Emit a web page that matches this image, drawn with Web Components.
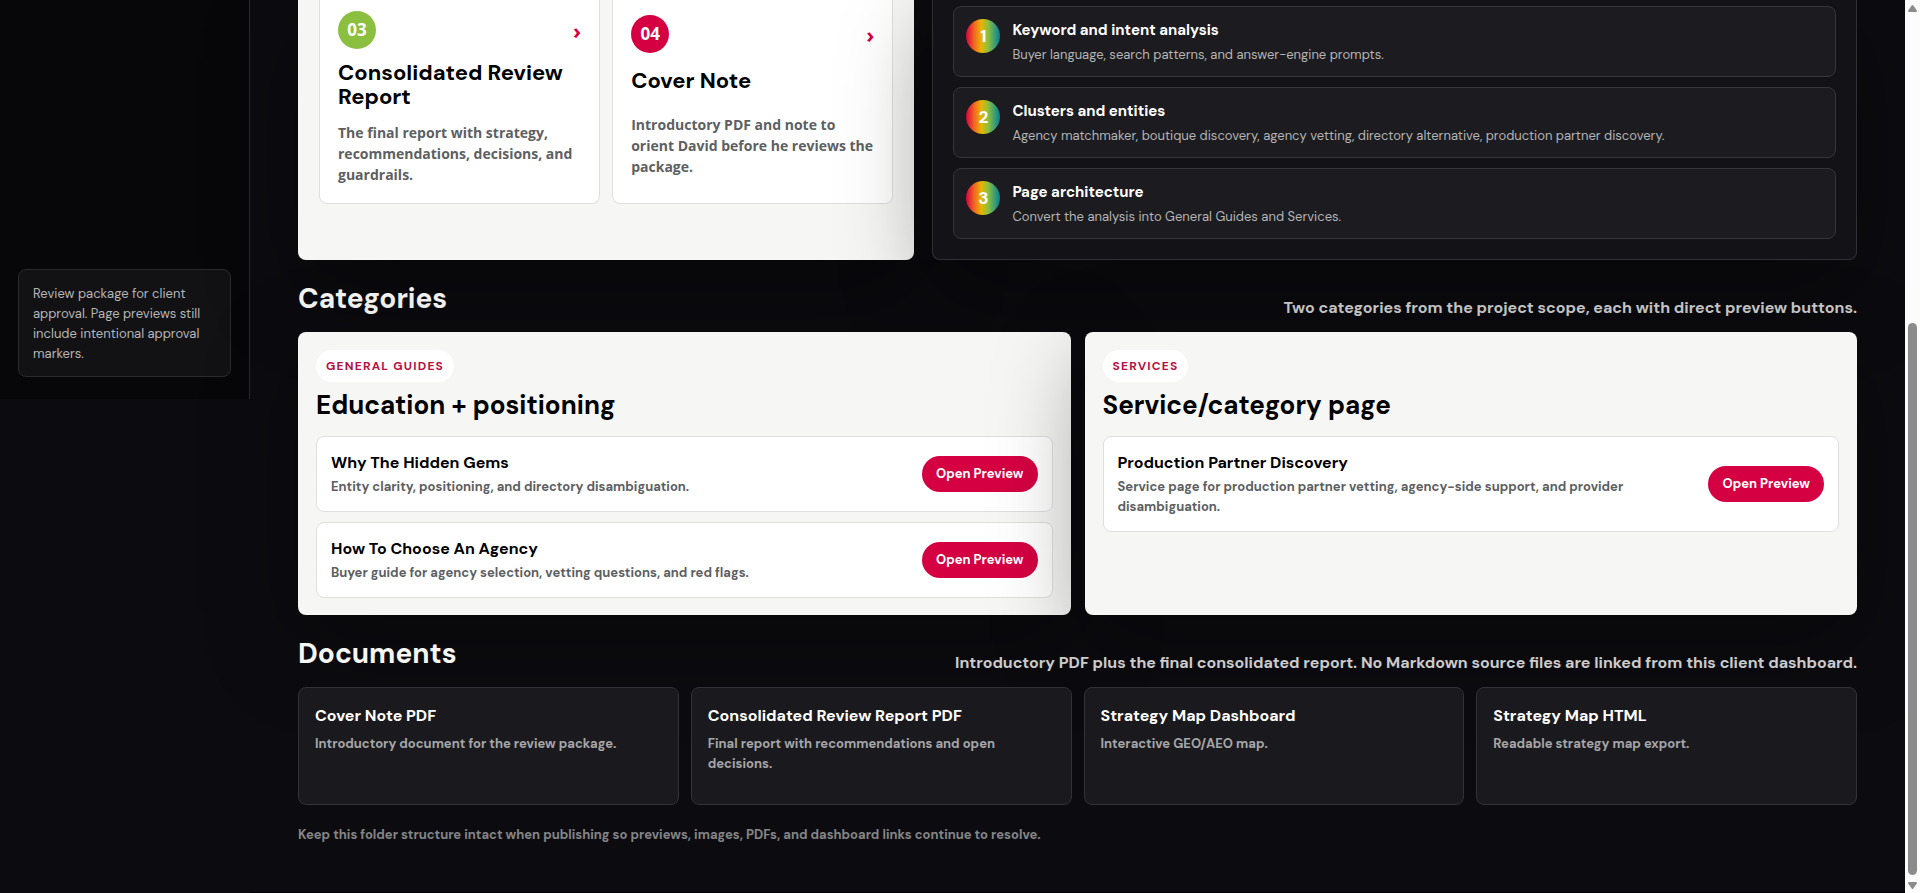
<!DOCTYPE html>
<html lang="en">
<head>
<meta charset="utf-8">
<title>Review package dashboard</title>
<style>
  body {
    margin: 0;
    background: #0c0c10;
    color: #fff;
    font: 400 16px/24px "DM Sans", Inter, "Open Sans", sans-serif;
  }
</style>
</head>
<body>
<app-shell>
  <side-note slot="side">Review package for client approval. Page previews still include intentional approval markers.</side-note>

  <panel-row>
    <review-panel>
      <review-card number="03" color="#8bbf3f" heading="Consolidated Review Report">The final report with strategy, recommendations, decisions, and guardrails.</review-card>
      <review-card number="04" color="#d50042" heading="Cover Note">Introductory PDF and note to orient David before he reviews the package.</review-card>
    </review-panel>
    <step-panel>
      <step-item number="1" heading="Keyword and intent analysis">Buyer language, search patterns, and answer-engine prompts.</step-item>
      <step-item number="2" heading="Clusters and entities">Agency matchmaker, boutique discovery, agency vetting, directory alternative, production partner discovery.</step-item>
      <step-item number="3" heading="Page architecture">Convert the analysis into General Guides and Services.</step-item>
    </step-panel>
  </panel-row>

  <section-head heading="Categories">Two categories from the project scope, each with direct preview buttons.</section-head>
  <category-grid>
    <category-panel label="General Guides" heading="Education + positioning">
      <preview-row heading="Why The Hidden Gems">Entity clarity, positioning, and directory disambiguation.</preview-row>
      <preview-row heading="How To Choose An Agency">Buyer guide for agency selection, vetting questions, and red flags.</preview-row>
    </category-panel>
    <category-panel label="Services" heading="Service/category page">
      <preview-row heading="Production Partner Discovery">Service page for production partner vetting, agency-side support, and provider disambiguation.</preview-row>
    </category-panel>
  </category-grid>

  <section-head heading="Documents">Introductory PDF plus the final consolidated report. No Markdown source files are linked from this client dashboard.</section-head>
  <doc-grid>
    <doc-card heading="Cover Note PDF">Introductory document for the review package.</doc-card>
    <doc-card heading="Consolidated Review Report PDF">Final report with recommendations and open decisions.</doc-card>
    <doc-card heading="Strategy Map Dashboard">Interactive GEO/AEO map.</doc-card>
    <doc-card heading="Strategy Map HTML">Readable strategy map export.</doc-card>
  </doc-grid>
  <page-footer>Keep this folder structure intact when publishing so previews, images, PDFs, and dashboard links continue to resolve.</page-footer>

  <scroll-rail slot="rail"></scroll-rail>
</app-shell>

<script>
  const BASE = `:host, *, ::before { box-sizing: border-box; } h2, h3, p { margin: 0; } a { color: inherit; text-decoration: none; }`;

  // Registers an element whose shadow root is built from its attributes.
  function define(name, css, html) {
    customElements.define(name, class extends HTMLElement {
      constructor() {
        super();
        this.attachShadow({ mode: 'open' });
      }
      connectedCallback() {
        const t = document.createElement('template');
        t.innerHTML = `<style>${BASE}${css}</style>` + html(this);
        this.shadowRoot.replaceChildren(t.content.cloneNode(true));
      }
    });
  }
  const at = (el, name) => el.getAttribute(name) || '';
  const slotOnly = () => '<slot></slot>';

  define('app-shell', `
    :host { display: grid; grid-template-columns: 250px minmax(0, 1fr) 15px; min-height: 100vh;
      --panel-shadow: 0 28px 90px rgba(0, 0, 0, .36); }
    aside { align-self: start; display: flex; flex-direction: column; justify-content: flex-end; min-height: 399px;
      padding: 22px 18px; background: #070709; border-right: 1px solid #29292c; }
    main { padding: 0 48px 47px; border-bottom: 1px solid #000; }
  `, () => `<aside><slot name="side"></slot></aside><main><slot></slot></main><slot name="rail"></slot>`);

  define('side-note', `
    :host { display: block; padding: 14px 14px 12px; border: 1px solid #2b2b2e; border-radius: 8px;
      background: #121214; color: #b6b6b6; font-size: 13px; line-height: 20px; }
  `, slotOnly);

  define('panel-row', `
    :host { display: grid; grid-template-columns: minmax(0, 2fr) minmax(0, 3fr); gap: 18px; }
  `, slotOnly);

  define('review-panel', `
    :host { display: grid; grid-template-columns: repeat(2, minmax(0, 1fr)); gap: 12px; align-items: start;
      padding: 0 21px; background: #f6f6f4; border-radius: 0 0 8px 8px; box-shadow: var(--panel-shadow); }
  `, slotOnly);

  define('review-card', `
    :host { display: block; font-family: "Open Sans", "Noto Sans", sans-serif; }
    a { display: grid; gap: 9px; min-height: 204px; padding: 9px 18px 13px; background: #fff; color: #000;
      border: 1px solid #dfdfdd; border-top: 0; border-radius: 0 0 8px 8px; }
    .top { display: flex; align-items: center; justify-content: space-between; }
    .badge { display: grid; place-items: center; width: 38px; height: 38px; border-radius: 50%;
      color: #fff; font-size: 17px; font-weight: 700; }
    .arrow { color: #d50042; font-size: 22px; line-height: 22px; font-weight: 700; }
    h3 { font: 700 22px/24px "DM Sans", Inter, sans-serif; }
    p { color: #5d5f63; font-size: 14px; line-height: 21px; font-weight: 700; }
  `, el => `<a href="#"><div class="top"><span class="badge" style="background:${at(el, 'color')}">${at(el, 'number')}</span><span class="arrow">›</span></div>
    <h3>${at(el, 'heading')}</h3><p><slot></slot></p></a>`);

  define('step-panel', `
    :host { display: flex; flex-direction: column; gap: 10px; padding: 6px 20px 20px; background: #121217;
      border: 1px solid #303034; border-top: 0; border-radius: 0 0 8px 8px; box-shadow: var(--panel-shadow); }
  `, slotOnly);

  define('step-item', `
    :host { display: flex; gap: 12px; padding: 12px 12px 11px; background: #1c1c20; border: 1px solid #36363a; border-radius: 8px; }
    .dot { display: grid; place-items: center; flex: none; width: 34px; height: 34px; border-radius: 50%; font-size: 17px; font-weight: 700;
      background: linear-gradient(90deg, #d50042, #f26a21 25%, #e8b500 45%, #8bbf3f 65%, #00819b); }
    h3 { font-size: 15px; line-height: 22px; font-weight: 700; }
    p { margin-top: 4px; color: #b4b4b5; font-size: 13px; line-height: 20px; }
  `, el => `<span class="dot">${at(el, 'number')}</span><div><h3>${at(el, 'heading')}</h3><p><slot></slot></p></div>`);

  define('section-head', `
    :host { display: flex; align-items: flex-end; justify-content: space-between; gap: 20px; margin: 18px 0 12px; }
    h2 { font-size: 28px; line-height: 42px; font-weight: 700; color: #f6f6f4; }
    p { color: #cbcbcb; font-weight: 700; text-align: right; }
  `, el => `<h2>${at(el, 'heading')}</h2><p><slot></slot></p>`);

  define('category-grid', `
    :host { display: grid; grid-template-columns: repeat(2, minmax(0, 1fr)); gap: 14px; }
  `, slotOnly);

  define('category-panel', `
    :host { display: block; padding: 18px 18px 17px; background: #f6f6f4; color: #000; border-radius: 8px;
      box-shadow: var(--panel-shadow); }
    .pill { display: block; width: fit-content; padding: 6px 10px; border-radius: 16px; background: #fff; color: #b80f45;
      font-size: 12px; line-height: 20px; font-weight: 700; letter-spacing: .1em; text-transform: uppercase; }
    h3 { margin: 9px 0 17px; font-size: 26px; line-height: 28px; font-weight: 700; }
    .rows { display: grid; gap: 10px; }
  `, el => `<span class="pill">${at(el, 'label')}</span><h3>${at(el, 'heading')}</h3><div class="rows"><slot></slot></div>`);

  define('preview-row', `
    :host { display: flex; align-items: center; justify-content: space-between; gap: 12px; padding: 14px;
      background: #fff; border: 1px solid #dfdfdd; border-radius: 8px; }
    h3 { font-size: 16px; line-height: 24px; font-weight: 700; }
    p { margin-top: 2px; color: #5d5f63; font-size: 13px; line-height: 20px; font-weight: 700; }
    a { flex: none; padding: 8px 14px; border-radius: 18px; background: #d50042; color: #fff;
      font-size: 13px; line-height: 20px; font-weight: 700; white-space: nowrap; }
  `, el => `<div><h3>${at(el, 'heading')}</h3><p><slot></slot></p></div><a href="#">Open Preview</a>`);

  define('doc-grid', `
    :host { display: grid; grid-template-columns: repeat(4, minmax(0, 1fr)); gap: 12px; }
  `, slotOnly);

  define('doc-card', `
    :host { display: grid; }
    a { display: block; min-height: 118px; padding: 16px; background: #1a1a1e; border: 1px solid #323236; border-radius: 8px; }
    h3 { font-size: 16px; line-height: 24px; font-weight: 700; }
    p { margin-top: 6px; color: #a6a6a8; font-size: 13px; line-height: 20px; font-weight: 700; }
  `, el => `<a href="#"><h3>${at(el, 'heading')}</h3><p><slot></slot></p></a>`);

  define('page-footer', `
    :host { display: block; margin-top: 20px; color: #858587; font-size: 13px; line-height: 20px; font-weight: 700; }
  `, slotOnly);

  define('scroll-rail', `
    :host { display: flex; flex-direction: column; align-items: center; height: 100vh; padding: 5px 0 4px; background: #fcfcfc; }
    svg { display: block; flex: none; width: 9px; height: 7px; fill: #8b8b8b; }
    .before { flex: 311; }
    .thumb { flex: 552; width: 9px; border-radius: 5px; background: #8b8b8b; }
    .after { flex: 7; }
  `, () => `<svg viewBox="0 0 9 7"><path d="M3.7.5q.8-1 1.6 0L8.8 5.4Q9.200 7 8 7H1Q-.2 7 .2 5.400z"/></svg>
    <div class="before"></div><div class="thumb"></div><div class="after"></div>
    <svg viewBox="0 0 9 7"><path d="M3.700 6.500q.8 1 1.600 0L8.800 1.600Q9.200 0 8 0H1Q-.2 0 .2 1.600z"/></svg>`);
</script>
</body>
</html>
